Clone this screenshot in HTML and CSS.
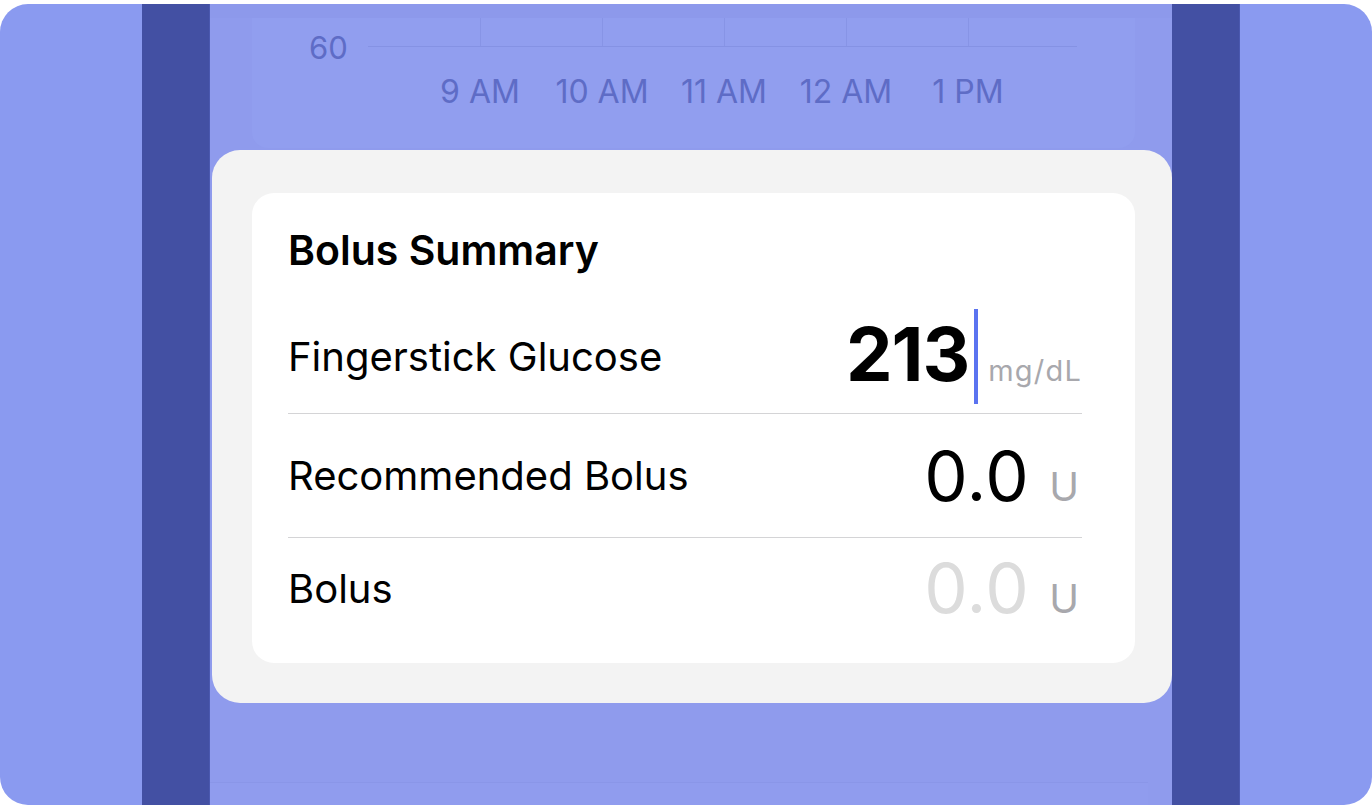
FILE: index.html
```html
<!DOCTYPE html>
<html lang="en">
<head>
<meta charset="utf-8">
<title>Bolus Summary</title>
<link rel="stylesheet" href="styles.css">
</head>
<body>
<div class="frame">
  <div class="rail"></div>
  <div class="center">
    <div class="top-band"></div>
    <div class="chart">
      <div class="chart-plot">
        <div class="y-label">60</div>
        <div class="grid">
          <div class="cell cell-first"></div>
          <div class="cell"></div>
          <div class="cell"></div>
          <div class="cell"></div>
          <div class="cell"></div>
          <div class="cell cell-last"></div>
        </div>
      </div>
      <div class="x-labels">
        <span class="x-label">9 AM</span>
        <span class="x-label">10 AM</span>
        <span class="x-label">11 AM</span>
        <span class="x-label">12 AM</span>
        <span class="x-label">1 PM</span>
      </div>
    </div>
    <div class="bottom-card"></div>

    <div class="modal">
      <div class="card">
        <h2 class="title">Bolus Summary</h2>
        <div class="row row-glucose">
          <span class="label">Fingerstick Glucose</span>
          <span class="value-group">
            <span class="value value-bold">213</span>
            <span class="caret"></span>
            <span class="unit unit-small">mg/dL</span>
          </span>
        </div>
        <div class="row row-recommended">
          <span class="label">Recommended Bolus</span>
          <span class="value-group">
            <span class="value">0.0</span>
            <span class="unit">U</span>
          </span>
        </div>
        <div class="row row-bolus">
          <span class="label">Bolus</span>
          <span class="value-group">
            <span class="value value-placeholder">0.0</span>
            <span class="unit">U</span>
          </span>
        </div>
      </div>
    </div>
  </div>
  <div class="rail"></div>
</div>
</body>
</html>
```

FILE: styles.css
```css
* { box-sizing: border-box; }

html, body {
  margin: 0;
  padding: 0;
  background: #ffffff;
  font-family: Inter, "Noto Sans", "Liberation Sans", sans-serif;
}

.frame {
  margin-top: 4px;
  height: 801px;
  border-radius: 28px;
  background: #8a9af0;
  display: flex;
  padding-left: 142px;
  overflow: hidden;
}

.rail {
  width: 68px;
  flex: 0 0 68px;
  background: #4350a3;
  border-right: 1px solid #4b59b0;
}

.center {
  width: 962px;
  flex: 0 0 962px;
  background: #8f9bed;
  position: relative;
  display: flex;
  flex-direction: column;
}

.top-band {
  height: 14px;
  flex: 0 0 14px;
  background: #8d99eb;
}

.chart {
  margin-left: 42px;
  width: 883px;
  height: 130px;
  background: #919eef;
  border-radius: 0 0 16px 16px;
  display: flex;
  flex-direction: column;
}

.chart-plot {
  display: flex;
  align-items: flex-end;
  height: 29px;
}

.y-label {
  width: 116px;
  padding-left: 57px;
  font-size: 31px;
  line-height: 32px;
  color: #5e6cc6;
  margin-bottom: -17px;
}

.grid {
  display: flex;
  height: 29px;
  border-bottom: 1px solid #8592e4;
}

.cell {
  width: 122px;
  height: 100%;
  border-left: 1px solid #8794e6;
}

.cell-first {
  width: 112px;
  border-left: none;
}

.cell-last {
  width: 109px;
}

.x-labels {
  display: flex;
  padding-left: 167px;
  margin-top: 27px;
}

.x-label {
  width: 122px;
  text-align: center;
  font-size: 32px;
  line-height: 36px;
  color: #5e6cc6;
}

.bottom-card {
  margin-top: auto;
  width: 938px;
  height: 23px;
  background: #909cee;
  border-top: 1px solid #8a96e8;
}

.modal {
  position: absolute;
  top: 146px;
  left: 2px;
  width: 960px;
  height: 553px;
  background: #f3f3f3;
  border-radius: 28px;
  padding: 43px 37px 40px 40px;
}

.card {
  background: #ffffff;
  border-radius: 22px;
  height: 470px;
  padding: 32px 53px 0 36px;
}

.title {
  margin: 0;
  font-size: 41px;
  line-height: 50px;
  font-weight: 600;
  color: #000;
}

.row {
  display: flex;
  align-items: center;
  justify-content: space-between;
}

.row-glucose {
  margin-top: 25px;
  height: 114px;
  border-bottom: 1px solid #d4d4d6;
}

.row-recommended {
  height: 124px;
  border-bottom: 1px solid #d4d4d6;
}

.row-bolus {
  height: 100px;
}

.label {
  font-size: 40px;
  color: #000;
}

.value-group {
  display: flex;
  align-items: baseline;
}

.value {
  font-size: 69px;
  font-weight: 400;
  color: #000;
  letter-spacing: 0.5px;
}

.value-bold {
  font-size: 74px;
  font-weight: 700;
  letter-spacing: -1px;
}

.value-placeholder {
  color: #dcdcdc;
}

.caret {
  display: inline-block;
  width: 4px;
  height: 95px;
  background: #5b73f0;
  margin: 0 10px 0 5px;
  align-self: center;
}

.unit {
  font-size: 40px;
  color: #a8a8ad;
  margin-left: 20px;
  margin-right: 3px;
}

.unit-small {
  font-size: 29px;
  letter-spacing: 1.2px;
  margin-left: 0;
  margin-right: 0;
}
```
